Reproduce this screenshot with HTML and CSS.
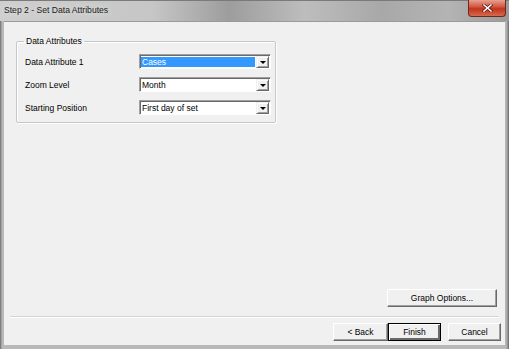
FILE: index.html
```html
<!DOCTYPE html>
<html lang="en">
<head>
    <meta charset="UTF-8">
    <title>Step 2 - Set Data Attributes</title>
    <link rel="stylesheet" href="styles.css">
</head>
<body>
    <div class="window">
        <div class="titlebar">
            <span class="title">Step 2 - Set Data Attributes</span>
            <div class="close">
                <svg width="11" height="8" viewBox="0 0 11 8">
                    <path d="M2 1 L9 7 M9 1 L2 7" stroke="#5a1a10" stroke-width="3" stroke-linecap="square"/>
                    <path d="M2 1 L9 7 M9 1 L2 7" stroke="#ffffff" stroke-width="1.6" stroke-linecap="square"/>
                </svg>
            </div>
        </div>
        <div class="client">
            <fieldset class="group">
                <legend>Data Attributes</legend>
                <div class="row">
                    <label>Data Attribute 1</label>
                    <div class="combo selected">
                        <span class="value">Cases</span>
                        <span class="arrow"></span>
                    </div>
                </div>
                <div class="row">
                    <label>Zoom Level</label>
                    <div class="combo">
                        <span class="value">Month</span>
                        <span class="arrow"></span>
                    </div>
                </div>
                <div class="row">
                    <label>Starting Position</label>
                    <div class="combo">
                        <span class="value">First day of set</span>
                        <span class="arrow"></span>
                    </div>
                </div>
            </fieldset>

            <div class="spacer"></div>

            <div class="options-row">
                <button class="btn wide">Graph Options...</button>
            </div>
            <div class="separator"></div>
            <div class="buttons">
                <button class="btn back">&lt; Back</button>
                <button class="btn default">Finish</button>
                <button class="btn cancel">Cancel</button>
            </div>
        </div>
    </div>
</body>
</html>
```

FILE: styles.css
```css
body {
    margin: 0;
    font-family: "Liberation Sans", Arial, sans-serif;
    font-size: 8.5px;
    color: #000;
    background: #fff;
}
.window {
    width: 509px;
    height: 349px;
    box-sizing: border-box;
    display: flex;
    flex-direction: column;
    background: linear-gradient(90deg, #707070 0, #8c8c8c 1px, #b8b8b8 2px, #b8b8b8 calc(100% - 3px), #8c8c8c calc(100% - 1px), #606060 100%);
}
.titlebar {
    position: relative;
    height: 21px;
    flex: none;
    background: linear-gradient(90deg, #cfcfcf 0, #c6c6c6 30%, #9d9d9d 45%, #bdbdbd 60%, #a8a8a8 75%, #b4b4b4 88%, #9a9a9a 100%);
    border-top: 1px solid #7a7a7a;
    box-sizing: border-box;
}
.title {
    position: absolute;
    left: 4px;
    top: 4px;
    font-size: 8.6px;
    color: #1a1a1a;
    text-shadow: 0 0 6px #eaeaea;
}
.close {
    position: absolute;
    right: 3px;
    top: -1px;
    width: 38px;
    height: 17px;
    box-sizing: border-box;
    border: 1px solid #6b2a20;
    border-top: none;
    border-radius: 0 0 4px 4px;
    background: linear-gradient(#e8a08f 0, #d35b45 40%, #c1341c 55%, #d66a4d 100%);
    display: flex;
    align-items: center;
    justify-content: center;
}
.client {
    flex: 1;
    margin: 0 4px 4px 4px;
    background: #f0f0f0;
    border-top: 1px solid #9a9a9a;
    display: flex;
    flex-direction: column;
}
.group {
    width: 260px;
    height: 87px;
    box-sizing: border-box;
    margin: 14px 0 0 12px;
    padding: 0 0 0 8px;
    border: 1px solid #c3c8cc;
    border-radius: 2px;
    box-shadow: inset 1px 1px #fff, 1px 1px #fff;
}
.group legend {
    padding: 0 2px;
    margin-left: -1px;
    line-height: 10px;
}
.row {
    display: flex;
    align-items: center;
    height: 23px;
}
.row:first-of-type {
    margin-top: 4px;
}
.row label {
    width: 114px;
    flex: none;
}
.combo {
    width: 132px;
    height: 15px;
    box-sizing: border-box;
    display: flex;
    background: #fff;
    border: 1px solid;
    border-color: #a0a0a0 #ffffff #ffffff #a0a0a0;
    box-shadow: inset 1px 1px #696969;
    padding: 1px 1px 0 1px;
}
.combo .value {
    flex: 1;
    line-height: 12px;
    padding-left: 1px;
}
.combo.selected .value {
    background: #3399ff;
    color: #fff;
    margin: 1px 1px 1px 0;
    line-height: 10px;
}
.arrow {
    width: 13px;
    height: 12px;
    flex: none;
    box-sizing: border-box;
    background: #f0f0f0;
    border: 1px solid;
    border-color: #f0f0f0 #696969 #696969 #f0f0f0;
    box-shadow: inset 1px 1px #fff, inset -1px -1px #a0a0a0;
    position: relative;
}
.arrow::after {
    content: "";
    position: absolute;
    left: 3px;
    top: 4px;
    border-left: 3px solid transparent;
    border-right: 3px solid transparent;
    border-top: 3px solid #000;
}
.spacer {
    flex: 1;
}
.options-row {
    display: flex;
    justify-content: flex-end;
    padding-right: 8px;
}
.btn {
    font-family: "Liberation Sans", Arial, sans-serif;
    font-size: 8.5px;
    color: #000;
    height: 18px;
    width: 53px;
    padding: 0;
    box-sizing: border-box;
    background: #f0f0f0;
    border: 1px solid;
    border-color: #ffffff #696969 #696969 #ffffff;
    box-shadow: inset -1px -1px #a0a0a0;
}
.btn.wide {
    width: 110px;
}
.btn.back {
    width: 55px;
}
.btn.default {
    border: 1px solid #000;
    box-shadow: inset 1px 1px #fff, inset -2px -2px #696969, inset -1px -1px #696969;
}
.separator {
    height: 1px;
    margin: 9px 6px 0 6px;
    border-top: 1px solid #d4d4d4;
    background: #fff;
}
.buttons {
    display: flex;
    justify-content: flex-end;
    margin: 5px 4px 4px 0;
}
.btn.cancel {
    margin-left: 7px;
}
```
